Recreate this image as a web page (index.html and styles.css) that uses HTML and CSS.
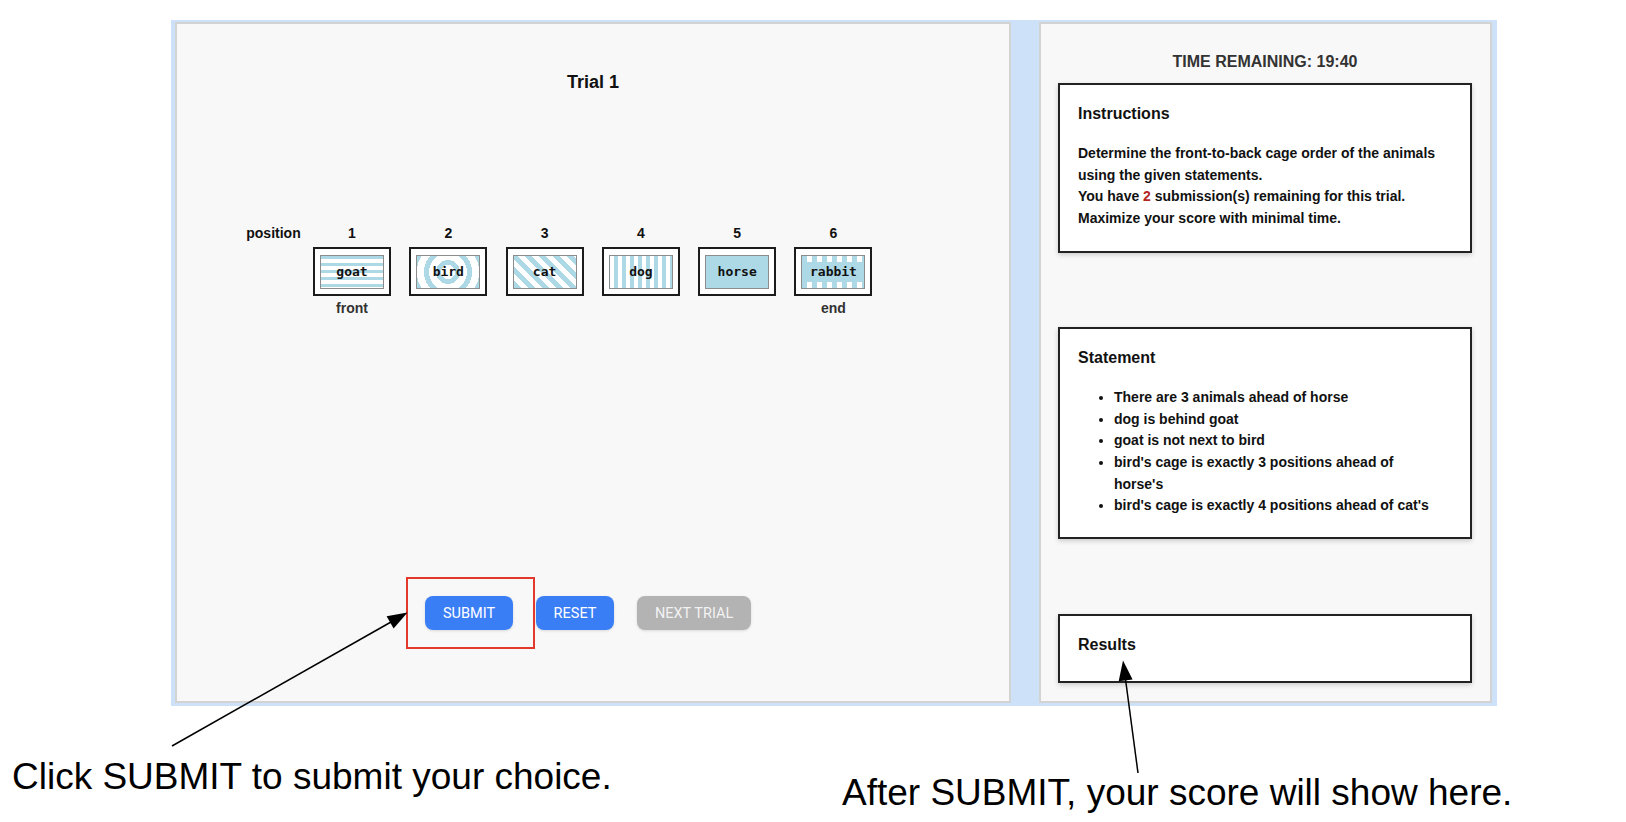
FILE: index.html
```html
<!DOCTYPE html>
<html lang="en">
<head>
<meta charset="utf-8">
<title>Trial 1</title>
<link rel="stylesheet" href="styles.css">
</head>
<body>
<div class="page">
  <div class="frame">
    <section class="main-panel">
      <h2 class="trial-title">Trial 1</h2>
      <div class="cage-grid">
        <div class="pos-label">position</div>
        <div class="pos-num">1</div>
        <div class="pos-num">2</div>
        <div class="pos-num">3</div>
        <div class="pos-num">4</div>
        <div class="pos-num">5</div>
        <div class="pos-num">6</div>

        <div class="spacer"></div>
        <div class="cage"><div class="cage-inner pat-goat">goat</div></div>
        <div class="cage"><div class="cage-inner pat-bird">bird</div></div>
        <div class="cage"><div class="cage-inner pat-cat">cat</div></div>
        <div class="cage"><div class="cage-inner pat-dog">dog</div></div>
        <div class="cage"><div class="cage-inner pat-horse">horse</div></div>
        <div class="cage"><div class="cage-inner pat-rabbit">rabbit</div></div>

        <div class="spacer"></div>
        <div class="end-label">front</div>
        <div class="spacer"></div>
        <div class="spacer"></div>
        <div class="spacer"></div>
        <div class="spacer"></div>
        <div class="end-label">end</div>
      </div>
      <div class="actions">
        <button class="btn btn-primary">SUBMIT</button>
        <button class="btn btn-primary">RESET</button>
        <button class="btn btn-disabled">NEXT TRIAL</button>
      </div>
    </section>

    <aside class="side-panel">
      <div class="timer">TIME REMAINING: 19:40</div>
      <div class="card card-instructions">
        <h3 class="card-title">Instructions</h3>
        <p class="card-text">Determine the front-to-back cage order of the animals using the given statements.<br>You have <span class="count">2</span> submission(s) remaining for this trial.<br>Maximize your score with minimal time.</p>
      </div>
      <div class="card card-statement">
        <h3 class="card-title">Statement</h3>
        <ul class="statement-list">
          <li>There are 3 animals ahead of horse</li>
          <li>dog is behind goat</li>
          <li>goat is not next to bird</li>
          <li>bird's cage is exactly 3 positions ahead of horse's</li>
          <li>bird's cage is exactly 4 positions ahead of cat's</li>
        </ul>
      </div>
      <div class="card card-results">
        <h3 class="card-title">Results</h3>
      </div>
    </aside>
  </div>

  <div class="captions">
    <p class="caption caption-left">Click SUBMIT to submit your choice.</p>
    <p class="caption caption-right">After SUBMIT, your score will show here.</p>
  </div>

  <svg class="annotations" width="1626" height="822" viewBox="0 0 1626 822" xmlns="http://www.w3.org/2000/svg">
    <rect x="407" y="578" width="127" height="70" fill="none" stroke="#e2392c" stroke-width="2"/>
    <line x1="172" y1="746" x2="391" y2="622" stroke="#000" stroke-width="1.5"/>
    <polygon points="407.5,612.5 393.6,628.5 386.6,616.3" fill="#000"/>
    <line x1="1138" y1="773" x2="1125.6" y2="680" stroke="#000" stroke-width="1.5"/>
    <polygon points="1123,660.5 1132.6,679.4 1118.7,681.2" fill="#000"/>
  </svg>
</div>
</body>
</html>
```

FILE: styles.css
```css
html, body {
  margin: 0;
  padding: 0;
  background: #ffffff;
}

body {
  font-family: "Liberation Sans", Arial, Helvetica, sans-serif;
  color: #111;
}

.page {
  position: relative;
  width: 1626px;
  height: 822px;
  overflow: hidden;
}

.frame {
  display: flex;
  gap: 28px;
  width: max-content;
  margin: 20px 0 0 171px;
  padding: 2px 5px 3px 4px;
  background: #cde1f8;
}

/* ---------- left panel ---------- */
.main-panel {
  box-sizing: border-box;
  width: 836px;
  height: 681px;
  border: 2px solid #d3d3d3;
  background: #f8f8f8;
  padding-top: 47.5px;
}

.trial-title {
  margin: 0;
  font-size: 18px;
  line-height: 21px;
  font-weight: bold;
  text-align: center;
  color: #111;
}

.cage-grid {
  display: grid;
  grid-template-columns: 55px repeat(6, 78px);
  column-gap: 18.3px;
  margin: 132.5px 0 0 62.7px;
  width: max-content;
}

.pos-label {
  justify-self: end;
  margin-right: -6px;
  font-size: 14px;
  line-height: 16px;
  font-weight: bold;
  color: #111;
}

.pos-num {
  text-align: center;
  font-size: 14px;
  line-height: 16px;
  font-weight: bold;
  color: #111;
}

.cage {
  box-sizing: border-box;
  width: 78px;
  height: 49px;
  margin-top: 6px;
  border: 2px solid #1c1c1c;
  background: #fff;
  display: flex;
  align-items: center;
  justify-content: center;
}

.cage-inner {
  box-sizing: border-box;
  width: 64px;
  height: 34px;
  border: 1px solid #8c8c8c;
  display: flex;
  align-items: center;
  justify-content: center;
  font-family: "DejaVu Sans Mono", "Liberation Mono", monospace;
  font-weight: bold;
  font-size: 13px;
  color: #111;
}

.pat-goat {
  background: repeating-linear-gradient(180deg, #add8e6 0 3.5px, #ffffff 3.5px 7px);
}

.pat-bird {
  background: repeating-radial-gradient(circle at 50% 50%, #ffffff 0 7px, #add8e6 7px 12px);
}

.pat-cat {
  background: repeating-linear-gradient(45deg, #add8e6 0 5px, #ffffff 5px 10px);
}

.pat-dog {
  background: repeating-linear-gradient(90deg, #ffffff 0 4px, #add8e6 4px 8px);
}

.pat-horse {
  background: #add8e6;
}

.pat-rabbit {
  background:
    repeating-linear-gradient(90deg, #add8e6 0 5px, transparent 5px 10px),
    linear-gradient(180deg, #ffffff 0 6px, #add8e6 6px 26px, #ffffff 26px 32px);
}

.end-label {
  margin-top: 4px;
  text-align: center;
  font-size: 14px;
  line-height: 16px;
  font-weight: bold;
  color: #333;
}

.actions {
  display: flex;
  gap: 22.5px;
  margin: 280px 0 0 248px;
}

.btn {
  box-sizing: border-box;
  height: 34px;
  padding: 0 18px;
  border: none;
  border-radius: 8px;
  font-family: Roboto, "Liberation Sans", sans-serif;
  font-size: 14.5px;
  font-weight: 400;
  color: #fff;
  cursor: pointer;
  box-shadow: 0 1px 3px rgba(0, 0, 0, 0.12);
}

.btn-primary {
  background: #3a7ef6;
}

.btn-disabled {
  background: #b3b3b3;
  color: #f2f2f2;
}

/* ---------- right panel ---------- */
.side-panel {
  box-sizing: border-box;
  width: 453px;
  height: 681px;
  border: 2px solid #d3d3d3;
  background: #f8f8f8;
  padding: 29px 18px 0 17px;
}

.timer {
  text-align: center;
  font-size: 16px;
  line-height: 18px;
  font-weight: bold;
  color: #333;
}

.card {
  background: #fff;
  border: 2px solid #222;
  box-shadow: 0 2px 5px rgba(0, 0, 0, 0.18);
  padding: 0 20px 0 18px;
}

.card-title {
  margin: 20px 0 0;
  font-size: 16px;
  line-height: 18px;
  font-weight: bold;
  color: #111;
}

.card-text {
  margin: 20px 0 0;
  font-size: 14px;
  line-height: 21.7px;
  font-weight: bold;
  color: #111;
}

.count {
  color: #b3261e;
}

.card-instructions {
  margin-top: 12px;
  padding-bottom: 21px;
}

.card-statement {
  margin-top: 74px;
  padding-bottom: 20px;
}

.statement-list {
  margin: 20px 0 0;
  padding: 0 10px 0 36px;
  font-size: 14px;
  line-height: 21.7px;
  font-weight: bold;
  color: #111;
}

.card-results {
  box-sizing: border-box;
  margin-top: 75px;
  height: 69px;
}

/* ---------- captions ---------- */
.captions {
  display: flex;
  align-items: flex-start;
  margin-top: 49.7px;
  padding-left: 12px;
}

.caption {
  margin: 0;
  font-family: "Liberation Sans", Arial, Helvetica, sans-serif;
  font-size: 37px;
  line-height: 42px;
  font-weight: normal;
  color: #000;
  white-space: nowrap;
}

.caption-left {
  width: 830px;
  flex: none;
}

.caption-right {
  margin-top: 16px;
}

.annotations {
  position: absolute;
  top: 0;
  left: 0;
  pointer-events: none;
}
```
